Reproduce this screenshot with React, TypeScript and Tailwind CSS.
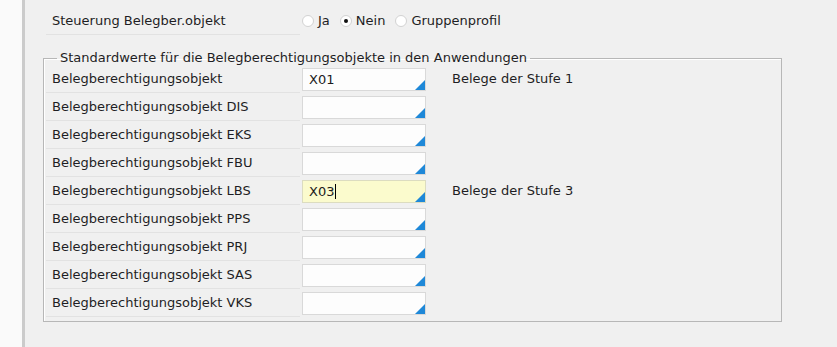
import React from "react";

const font = { fontFamily: '"DejaVu Sans", Verdana, sans-serif' };

function Triangle() {
  return (
    <svg className="absolute right-0 bottom-0" width="10" height="10" viewBox="0 0 10 10">
      <polygon points="10,0 10,10 0,10" fill="#1e88d8" />
    </svg>
  );
}

function Field({ value, active }: { value?: string; active?: boolean }) {
  return (
    <div
      className={
        "relative w-[124px] h-[23px] border flex items-center pl-[6px] " +
        (active ? "bg-[#fbfbcd] border-[#dcdcc0]" : "bg-[#fdfdfd] border-[#d9d9d9]")
      }
    >
      <span className="text-[13px] text-[#1c1c1c] leading-none">{value}</span>
      {active && <span className="w-px h-[15px] bg-black ml-[1px]" />}
      <Triangle />
    </div>
  );
}

function Radio({ checked }: { checked?: boolean }) {
  return (
    <span className="w-[12px] h-[12px] rounded-full border border-[#d2d2d2] bg-white flex items-center justify-center">
      {checked && <span className="w-[4px] h-[4px] rounded-full bg-[#111]" />}
    </span>
  );
}

const rows: { label: string; value?: string; desc?: string; active?: boolean }[] = [
  { label: "Belegberechtigungsobjekt", value: "X01", desc: "Belege der Stufe 1" },
  { label: "Belegberechtigungsobjekt DIS" },
  { label: "Belegberechtigungsobjekt EKS" },
  { label: "Belegberechtigungsobjekt FBU" },
  { label: "Belegberechtigungsobjekt LBS", value: "X03", desc: "Belege der Stufe 3", active: true },
  { label: "Belegberechtigungsobjekt PPS" },
  { label: "Belegberechtigungsobjekt PRJ" },
  { label: "Belegberechtigungsobjekt SAS" },
  { label: "Belegberechtigungsobjekt VKS" },
];

export default function App() {
  return (
    <div className="w-[837px] h-[347px] bg-[#f0f0f0] flex text-[13px] text-[#1e1e24]" style={font}>
      <div className="w-[22px] h-full bg-[#fafafa]" />
      <div className="w-[3px] h-full bg-[#cbcbcb]" />
      <div className="flex-1 flex flex-col pl-[18px] pt-[7px]">
        <div className="flex items-center h-[28px]">
          <div className="ml-[3px] w-[254px] h-[28px] border-b border-[#e2e2e2] flex items-center pl-[6px]">
            Steuerung Belegber.objekt
          </div>
          <div className="flex items-center ml-[2px] -mt-[1px]">
            <Radio />
            <span className="ml-[4px]">Ja</span>
            <span className="ml-[10px]"><Radio checked /></span>
            <span className="ml-[4px]">Nein</span>
            <span className="ml-[10px]"><Radio /></span>
            <span className="ml-[4px]">Gruppenprofil</span>
          </div>
        </div>
        <fieldset className="mt-[15px] w-[739px] h-[272px] border border-[#b7b7b7] shadow-[inset_1px_1px_0_#ffffff] pl-[2px]">
          <legend className="ml-[11px] px-[3px] leading-[16px] text-[#1e1e24]">
            Standardwerte für die Belegberechtigungsobjekte in den Anwendungen
          </legend>
          <div className="flex flex-col -mt-[1px]">
            {rows.map((r) => (
              <div key={r.label} className="flex items-center h-[28px]">
                <div className="w-[254px] h-[28px] border-b border-[#e2e2e2] flex items-center pl-[6px]">
                  {r.label}
                </div>
                <div className="ml-[2px] mt-[1px]">
                  <Field value={r.value} active={r.active} />
                </div>
                {r.desc && <div className="ml-[26px]">{r.desc}</div>}
              </div>
            ))}
          </div>
        </fieldset>
      </div>
    </div>
  );
}
